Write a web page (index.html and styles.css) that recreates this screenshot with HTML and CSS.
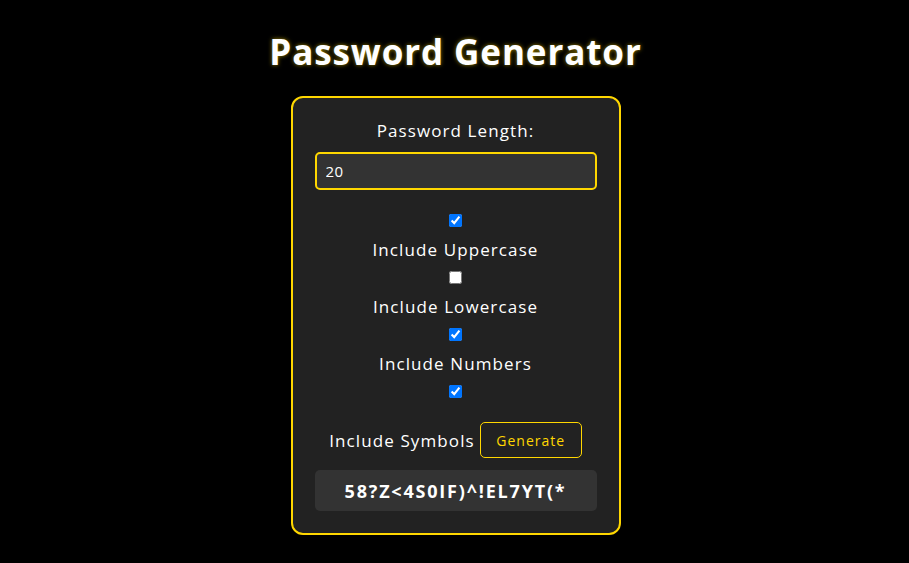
FILE: index.html
```html
<!DOCTYPE html>
<html lang="en">
<head>
<meta charset="utf-8">
<title>Password Generator</title>
<link rel="stylesheet" href="styles.css">
</head>
<body>
<h1 class="title">Password Generator</h1>
<main class="card">
  <label class="label" for="len">Password Length:</label>
  <input class="len-input" id="len" type="number" value="20">
  <div class="options">
    <input class="check" type="checkbox" id="up" checked>
    <label class="label" for="up">Include Uppercase</label>
    <input class="check" type="checkbox" id="low">
    <label class="label" for="low">Include Lowercase</label>
    <input class="check" type="checkbox" id="num" checked>
    <label class="label" for="num">Include Numbers</label>
    <input class="check" type="checkbox" id="sym" checked>
  </div>
  <div class="action-row">
    <label class="label" for="sym">Include Symbols</label>
    <button class="gen-btn" type="button">Generate</button>
  </div>
  <div class="output">58?Z&lt;4S0IF)^!EL7YT(*</div>
</main>
</body>
</html>
```
FILE: styles.css
```css
* { box-sizing: border-box; }
html, body { margin: 0; padding: 0; background: #000; }
body {
  font-family: "Open Sans", "DejaVu Sans", sans-serif;
  color: #fff;
  display: flex;
  flex-direction: column;
  align-items: center;
  padding: 30px 0 0 2px;
}
.title {
  margin: 0 0 22px;
  font-size: 35px;
  line-height: 44px;
  font-weight: 700;
  letter-spacing: 0.9px;
  text-shadow: 0 0 4px rgba(255, 215, 0, 0.6);
}
.card {
  width: 330px;
  background: #222;
  border: 2px solid #ffd700;
  border-radius: 12px;
  padding: 23px 22px 22px;
  display: flex;
  flex-direction: column;
  align-items: center;
}
.label {
  font-size: 17px;
  line-height: 19px;
  height: 19px;
  letter-spacing: 1.1px;
}
.len-input {
  margin-top: 12px;
  width: 282px;
  height: 38px;
  background: #333;
  border: 2px solid #ffd700;
  border-radius: 5px;
  color: #fff;
  font-family: inherit;
  font-size: 15px;
  letter-spacing: 0.5px;
  padding: 0 9px;
  outline: none;
  -moz-appearance: textfield;
}
.len-input::-webkit-inner-spin-button,
.len-input::-webkit-outer-spin-button { -webkit-appearance: none; margin: 0; }
.options {
  margin-top: 21px;
  display: flex;
  flex-direction: column;
  align-items: center;
  gap: 9.5px;
}
.check {
  width: 13px;
  height: 13px;
  margin: 3px 0;
}
.action-row {
  margin-top: 21px;
  display: flex;
  align-items: center;
  gap: 5px;
}
.gen-btn {
  height: 36px;
  width: 102px;
  background: transparent;
  border: 1px solid #ffd700;
  border-radius: 5px;
  color: #ffd700;
  font-family: inherit;
  font-size: 14px;
  letter-spacing: 1px;
  cursor: pointer;
}
.output {
  margin-top: 12px;
  width: 282px;
  height: 41px;
  background: #333;
  border-radius: 5px;
  display: flex;
  align-items: center;
  justify-content: center;
  font-size: 18px;
  font-weight: 700;
  letter-spacing: 1.8px;
}
```
